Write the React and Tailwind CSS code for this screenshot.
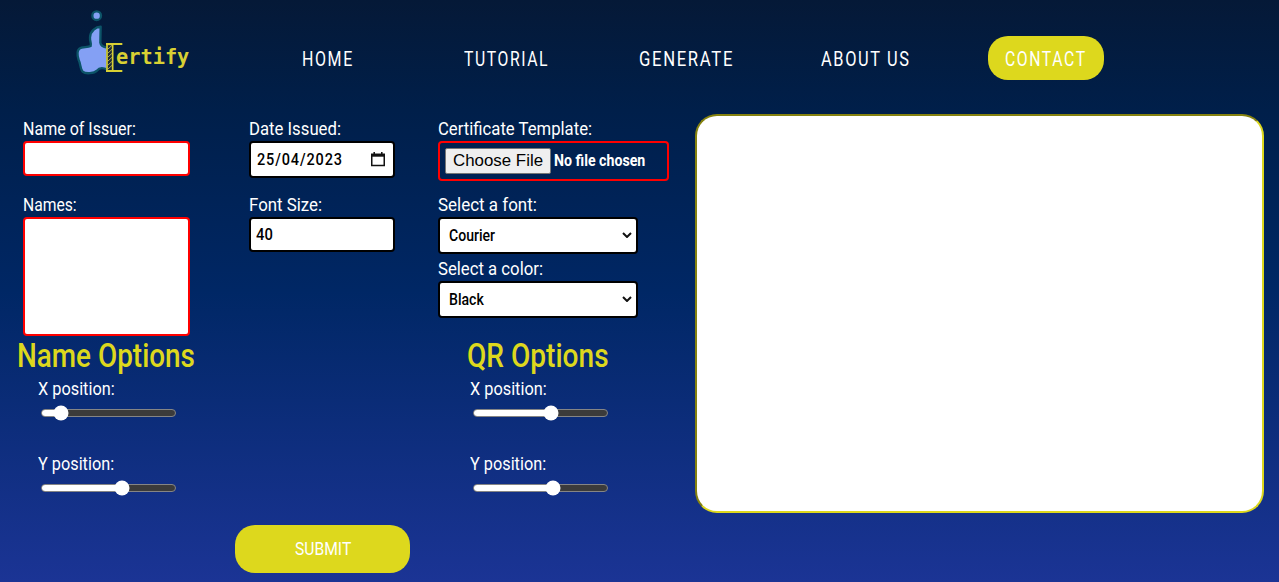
import { useLayoutEffect, useRef, useState } from 'react';

// Condenses a line of text horizontally so that it fills the given width.
function Fit({ width, className = '', children }) {
  const ref = useRef(null);
  const [scale, setScale] = useState(1);
  useLayoutEffect(() => {
    setScale(width / ref.current.offsetWidth);
  }, [width]);
  return (
    <span className={`block whitespace-nowrap ${className}`} style={{ width }}>
      <span ref={ref} className="inline-block origin-left" style={{ transform: `scaleX(${scale})` }}>
        {children}
      </span>
    </span>
  );
}

function Logo() {
  return (
    <svg viewBox="0 0 450 270" className="ml-[60px] h-[90px] w-[150px] shrink-0">
      <circle cx="110" cy="47" r="13" fill="#84a0f4" stroke="#0c5468" strokeWidth="7" />
      <path
        d="M122 80 C108 80 91 93 90 112 C89 124 95 130 92 138 C82 144 66 138 58 146 C48 155 53 170 56 180 C62 191 60 207 68 215 C77 223 103 220 111 212 C117 204 126 201 142 209 L142 143 C130 141 122 137 121 128 Z"
        fill="#84a0f4"
        stroke="#0c5468"
        strokeWidth="7"
        strokeLinejoin="round"
      />
      <rect x="141" y="133" width="17" height="80" fill="#1b2838" stroke="#d8d033" strokeWidth="5" />
      <path
        d="M143 148l13-12M143 160l13-12M143 172l13-12M143 184l13-12M143 196l13-12M143 208l13-12"
        stroke="#b4b04a"
        strokeWidth="3"
      />
      <path d="M138 132H187M138 213H187" stroke="#d8d033" strokeWidth="6" />
      <text
        x="168"
        y="192"
        textLength="220"
        lengthAdjust="spacingAndGlyphs"
        className="fill-[#d8d033] font-['DejaVu_Sans_Mono','Liberation_Mono',monospace] text-[66px] font-bold"
      >
        ertify
      </text>
    </svg>
  );
}

const label = 'h-6 text-[18px] leading-6';

function Slider({ text, value, width }) {
  return (
    <div className="h-[75px]">
      <Fit width={width} className={label}>{text}</Fit>
      <div className="ml-[3px] flex h-6 w-[135px] items-center">
        <div className="relative h-2 w-full rounded-full border border-[#858585] bg-[#3b3b3b]">
          <div className="h-full rounded-l-full bg-white" style={{ width: value }} />
          <div
            className="absolute top-1/2 size-[15px] -translate-x-1/2 -translate-y-1/2 rounded-full bg-white"
            style={{ left: value - 1.5 }}
          />
        </div>
      </div>
    </div>
  );
}

function Select({ text, width }) {
  return (
    <div className="flex h-[37px] w-[200px] items-center justify-between rounded-[4px] border-2 border-black bg-white pr-1 pl-[9px] text-[16.5px] font-medium text-black">
      <Fit width={width} className="pt-0.5">{text}</Fit>
      <svg viewBox="0 0 10 6" className="mb-px h-[6px] w-[10px]" fill="none" stroke="#111" strokeWidth="2">
        <path d="M1 1l4 4 4-4" />
      </svg>
    </div>
  );
}

const links = [
  { text: 'HOME', width: 52, place: 'ml-[92px]' },
  { text: 'TUTORIAL', width: 85, place: 'ml-[110px]' },
  { text: 'GENERATE', width: 95, place: 'ml-[90px]' },
  { text: 'ABOUT US', width: 90, place: 'ml-[87px]' },
];

export default function App() {
  return (
    <div className="flex h-[582px] w-[1279px] flex-col overflow-hidden bg-linear-[180deg,#051937_0%,#001f4a_19%,#002765_50%,#1b3495_100%] font-['Roboto','Liberation_Sans',sans-serif] text-white">
      <header className="flex h-[114px] shrink-0 items-start">
        <Logo />
        <nav className="mt-9 flex h-11 items-center text-[20px] tracking-[2px]">
          {links.map((l) => (
            <a key={l.text} className={l.place}>
              <Fit width={l.width} className="pt-px">{l.text}</Fit>
            </a>
          ))}
          <a className="ml-[77px] flex h-11 w-[116px] items-center rounded-[20px] bg-[#ddd81d] pl-[17px]">
            <Fit width={82} className="pt-px">CONTACT</Fit>
          </a>
        </nav>
      </header>

      <main className="flex">
        <form className="flex w-[695px] shrink-0 flex-col pt-[3px]">
          <div className="flex h-[219px] pl-[23px]">
            <div className="w-[226px]">
              <Fit width={113} className={label}>Name of Issuer:</Fit>
              <div className="mb-[17px] h-[35px] w-[167px] rounded-[4px] border-2 border-[#ff0000] bg-white" />
              <Fit width={54} className={label}>Names:</Fit>
              <div className="h-[119px] w-[167px] rounded-[4px] border-2 border-[#ff0000] bg-white" />
            </div>
            <div className="w-[189px]">
              <Fit width={92} className={label}>Date Issued:</Fit>
              <div className="mb-[15px] flex h-[37px] w-[146px] items-center justify-between rounded-[4px] border-2 border-black bg-white pr-2 pl-[6px] text-[16.5px] font-medium text-black">
                <Fit width={86} className="pt-0.5 tracking-[1px]">25/04/2023</Fit>
                <svg viewBox="0 0 14 15" className="mb-px h-[15px] w-[14px]" fill="none" stroke="#111">
                  <path d="M0.75 2.5h12.5v11H0.75z" strokeWidth="1.5" />
                  <path d="M0 3.2h14" strokeWidth="3" />
                  <path d="M3.2 0v3M10.8 0v3" strokeWidth="1.5" />
                </svg>
              </div>
              <Fit width={73} className={label}>Font Size:</Fit>
              <div className="flex h-[35px] w-[146px] items-center rounded-[4px] border-2 border-black bg-white pl-[5px] text-[16.5px] font-medium text-black">
                <Fit width={17} className="pt-0.5">40</Fit>
              </div>
            </div>
            <div>
              <Fit width={154} className={label}>Certificate Template:</Fit>
              <div className="mb-3 flex h-10 w-[231px] items-center rounded-[4px] border-2 border-[#ff0000] pl-[5px]">
                <div className="mb-px flex h-[26px] w-[106px] items-center justify-center rounded-[2px] border border-[#767676] bg-[#efefef] font-['Liberation_Sans',Arial,sans-serif] text-[16.5px] text-black">
                  <Fit width={90}>Choose File</Fit>
                </div>
                <Fit width={91} className="ml-[3px] text-[16.5px] font-bold">No file chosen</Fit>
              </div>
              <Fit width={99} className={label}>Select a font:</Fit>
              <Select text="Courier" width={46} />
              <Fit width={105} className={`mt-[3px] ${label}`}>Select a color:</Fit>
              <Select text="Black" width={35} />
            </div>
          </div>

          <div className="flex h-[189px]">
            <section className="ml-[17px] w-[450px]">
              <Fit width={178} className="h-[41px] text-[34px] leading-[39px] font-medium text-[#ddd81d]">Name Options</Fit>
              <div className="pl-[21px]">
                <Slider text="X position:" value={20} width={77} />
                <Slider text="Y position:" value={81} width={76} />
              </div>
            </section>
            <section>
              <Fit width={142} className="h-[41px] text-[34px] leading-[39px] font-medium text-[#ddd81d]">QR Options</Fit>
              <div className="pl-[3px]">
                <Slider text="X position:" value={78} width={77} />
                <Slider text="Y position:" value={80} width={76} />
              </div>
            </section>
          </div>

          <button
            type="button"
            className="ml-[235px] flex h-12 w-[175px] items-center justify-center rounded-[20px] bg-[#ddd81d] text-[19px]"
          >
            <Fit width={56} className="pt-px">SUBMIT</Fit>
          </button>
        </form>

        <div className="h-[399px] w-[569px] rounded-[22px] border-2 border-t-[#85820f] border-r-[#ddd81d] border-b-[#ddd81d] border-l-[#85820f] bg-white" />
      </main>
    </div>
  );
}
